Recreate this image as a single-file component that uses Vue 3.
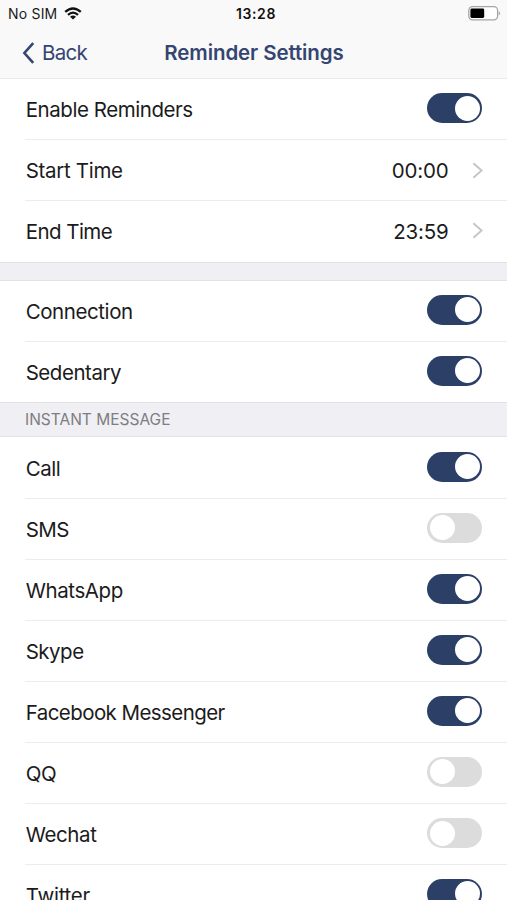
<template>
  <div class="screen">
    <header class="top">
      <div class="status-bar">
        <div class="carrier">
          <span>No SIM</span>
          <svg class="wifi" width="18" height="13" viewBox="0 0 18 13">
            <path d="M1.2 4.9 Q9 -2 16.8 4.9" />
            <path d="M4 7.8 Q9 3.4 14 7.8" />
            <path class="dot" d="M9 12.6 L6 9.7 Q9 7.3 12 9.7 Z" />
          </svg>
        </div>
        <span class="clock">13:28</span>
        <svg class="battery" width="33" height="15" viewBox="0 0 33 15">
          <rect class="shell" x="0.8" y="0.7" width="28.8" height="13.2" rx="3.8" />
          <rect x="2.4" y="2.6" width="13.8" height="9.4" rx="1.4" />
          <path class="cap" d="M30.8 5 Q33.2 7.3 30.8 9.6 Z" />
        </svg>
      </div>
      <nav class="nav-bar">
        <a class="back">
          <svg width="13" height="22" viewBox="0 0 13 22">
            <path d="M11.2 1.2 L2.4 11 L11.2 20.8" />
          </svg>
          <span>Back</span>
        </a>
        <h1>Reminder Settings</h1>
      </nav>
    </header>

    <section v-for="(group, i) in groups" :key="i" class="group">
      <div v-if="i > 0" class="group-head" :class="{ titled: group.title }">{{ group.title }}</div>
      <div class="rows">
        <div v-for="row in group.rows" :key="row.label" class="row">
          <span class="label" :style="{ letterSpacing: row.spacing + 'px' }">{{ row.label }}</span>
          <template v-if="row.time">
            <span class="time">{{ row.time }}</span>
            <svg class="chevron" width="11" height="17" viewBox="0 0 11 17">
              <path d="M1.4 1.3 L9.6 8.5 L1.4 15.7" />
            </svg>
          </template>
          <button v-else class="switch" :class="{ on: row.on }" :aria-label="row.label" @click="row.on = !row.on">
            <span class="knob"></span>
          </button>
        </div>
      </div>
    </section>
  </div>
</template>

<script setup>
import { reactive } from 'vue'

// spacing: letter-spacing of the label in px
const groups = reactive([
  {
    rows: [
      { label: 'Enable Reminders', on: true, spacing: -0.44 },
      { label: 'Start Time', time: '00:00', spacing: -0.3 },
      { label: 'End Time', time: '23:59', spacing: -0.55 }
    ]
  },
  {
    rows: [
      { label: 'Connection', on: true, spacing: -0.42 },
      { label: 'Sedentary', on: true, spacing: -0.47 }
    ]
  },
  {
    title: 'INSTANT MESSAGE',
    rows: [
      { label: 'Call', on: true, spacing: -0.5 },
      { label: 'SMS', on: false, spacing: -0.6 },
      { label: 'WhatsApp', on: true, spacing: -0.4 },
      { label: 'Skype', on: true, spacing: -0.5 },
      { label: 'Facebook Messenger', on: true, spacing: -0.57 },
      { label: 'QQ', on: false, spacing: -0.3 },
      { label: 'Wechat', on: false, spacing: -0.4 },
      { label: 'Twitter', on: true, spacing: -0.25 }
    ]
  }
])
</script>

<style>
body {
  background: #fff;
}
</style>

<style scoped>
.screen {
  height: 900px;
  overflow: hidden;
  background: #fff;
  color: #1b1b1c;
  font-family: Inter, "Liberation Sans", sans-serif;
}

/* --- Status and navigation bars --- */
.top {
  box-sizing: border-box;
  height: 79px;
  background: #f9f9f9;
  border-bottom: 1px solid #e9e9ea;
}

.status-bar {
  display: grid;
  grid-template-columns: 1fr auto 1fr;
  align-items: center;
  height: 27px;
  padding: 0 6px 0 8px;
  font-size: 14px;
}

.carrier {
  display: flex;
  align-items: center;
  gap: 7px;
  letter-spacing: 0.2px;
}

.wifi {
  fill: none;
  stroke: #111;
  stroke-width: 2.3;
}
.wifi .dot {
  fill: #111;
  stroke: none;
}

.clock {
  padding-left: 3px;
  font-weight: 600;
  letter-spacing: 0.65px;
  color: #111;
}

.battery {
  justify-self: end;
  margin-bottom: 1px;
  fill: #000;
}
.battery .shell {
  fill: #fff;
  stroke: #a5a5a5;
  stroke-width: 1.3;
}
.battery .cap {
  fill: #a5a5a5;
}

.nav-bar {
  display: grid;
  grid-template-columns: 1fr auto 1fr;
  align-items: center;
  height: 51px;
  padding: 0 21px 0 22px;
  color: #344572;
}

.back {
  display: flex;
  align-items: center;
  gap: 7px;
  font-size: 20.5px;
  letter-spacing: -0.75px;
}
.back svg {
  fill: none;
  stroke: #344572;
  stroke-width: 2.6;
}

h1 {
  margin: 0;
  font-size: 20.5px;
  font-weight: 600;
  letter-spacing: -0.1px;
}

/* --- Groups --- */
.group-head {
  box-sizing: border-box;
  height: 19px;
  background: #efeff4;
  border-top: 1px solid #e2e2e5;
  border-bottom: 1px solid #e2e2e5;
}
.group-head.titled {
  height: 35px;
  padding-left: 25px;
  line-height: 33px;
  font-size: 15.5px;
  color: #7d7d82;
}

.row {
  box-sizing: border-box;
  display: flex;
  align-items: center;
  height: 61.1px;
  margin-left: 25px;
  padding-right: 25px;
  border-bottom: 1px solid #ececed;
}
.row:last-child {
  height: 60.6px;
  border-bottom-color: transparent;
}

.label {
  flex: 1;
  padding: 1.2px 0 0 0.7px;
  font-size: 20.5px;
  white-space: nowrap;
}

.time {
  padding-top: 1.2px;
  font-size: 20.5px;
  letter-spacing: -0.2px;
}

.chevron {
  margin-left: 23.5px;
  fill: none;
  stroke: #c5c5c8;
  stroke-width: 2;
}
.row:has(.chevron) {
  padding-right: 24px;
}

.switch {
  display: flex;
  align-items: center;
  width: 55px;
  height: 30px;
  margin: 0 0 2px;
  padding: 0 2.5px;
  border: 0;
  border-radius: 15px;
  background: #dcdcdc;
}
.switch.on {
  justify-content: flex-end;
  background: #2c4067;
}

.knob {
  width: 25px;
  height: 25px;
  border-radius: 50%;
  background: #fff;
}
</style>
